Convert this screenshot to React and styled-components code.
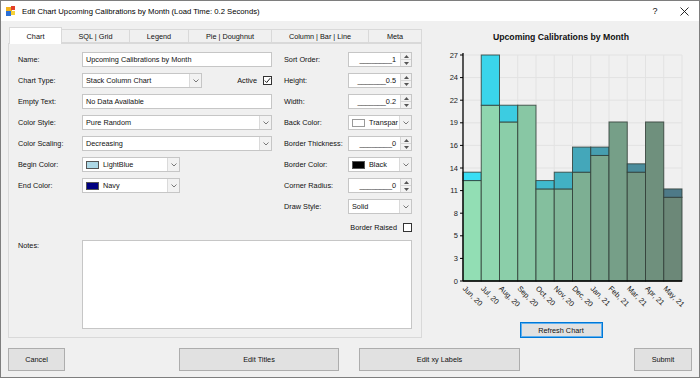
import React from "react";
import styled, { createGlobalStyle } from "styled-components";

const GlobalStyle = createGlobalStyle`
  html, body {
    margin: 0;
    padding: 0;
    background: #f0f0f0;
  }
`;

const Window = styled.div`
  width: 700px;
  height: 378px;
  box-sizing: border-box;
  border: 1px solid #7e7e7e;
  background: #f0f0f0;
  display: flex;
  flex-direction: column;
  font-family: "Liberation Sans", Arial, sans-serif;
  font-size: 7.3px;
  color: #111;
  overflow: hidden;
`;

const TitleBar = styled.div`
  height: 20px;
  flex: none;
  background: #fff;
  display: flex;
  align-items: center;
  padding-left: 5px;
`;

const TitleText = styled.div`
  margin-left: 6px;
  font-size: 7.7px;
  color: #000;
  flex: 1;
`;

const CaptionButton = styled.div`
  width: ${(p) => p.w}px;
  height: 20px;
  display: flex;
  align-items: center;
  justify-content: center;
  font-size: 9px;
  color: #111;
`;

const Body = styled.div`
  flex: 1;
  min-height: 0;
  display: flex;
  gap: 8px;
  padding: 6px 7px 10px 7px;
`;

const TabControl = styled.div`
  width: 414px;
  display: flex;
  flex-direction: column;
`;

const TabStrip = styled.div`
  height: 16px;
  display: flex;
  align-items: flex-end;
`;

const Tab = styled.div`
  position: relative;
  z-index: ${(p) => (p.active ? 1 : 0)};
  width: ${(p) => p.w}px;
  margin-left: ${(p) => p.ml || 0}px;
  height: ${(p) => (p.active ? 17 : 14)}px;
  margin-bottom: ${(p) => (p.active ? -1 : 0)}px;
  box-sizing: border-box;
  border: 1px solid #d9d9d9;
  border-bottom: ${(p) => (p.active ? "none" : "1px solid #d9d9d9")};
  border-left: ${(p) => (p.first ? "1px solid #d9d9d9" : "none")};
  background: ${(p) => (p.active ? "#fff" : "#f0f0f0")};
  display: flex;
  align-items: center;
  justify-content: center;
  white-space: nowrap;
`;

const TabPage = styled.div`
  flex: 1;
  box-sizing: border-box;
  border: 1px solid #d9d9d9;
  background: #f0f0f0;
  padding: 5px 9px 0 9px;
  display: flex;
  flex-direction: column;
`;

const FieldColumns = styled.div`
  display: flex;
  gap: 12px;
`;

const FieldGrid = styled.div`
  display: grid;
  grid-template-columns: 64px ${(p) => p.control}px;
  grid-auto-rows: 21px;
  align-items: center;
`;

const Label = styled.span`
  white-space: nowrap;
`;

const Cell = styled.div`
  display: flex;
  align-items: center;
  justify-content: ${(p) => p.justify || "flex-start"};
  grid-column: ${(p) => p.span || "auto"};
`;

const TrailingCheck = styled.div`
  margin-left: auto;
  display: flex;
  align-items: center;
`;

const TextBox = styled.div`
  width: ${(p) => p.w}px;
  height: 15px;
  box-sizing: border-box;
  border: 1px solid #c6c6c6;
  background: #fff;
  display: flex;
  align-items: center;
  padding-left: 3px;
  white-space: nowrap;
`;

const Combo = styled.div`
  width: ${(p) => p.w}px;
  height: 15px;
  box-sizing: border-box;
  border: 1px solid #c6c6c6;
  background: #fff;
  display: flex;
`;

const ComboValue = styled.div`
  flex: 1;
  display: flex;
  align-items: center;
  gap: 4px;
  padding-left: 3px;
  white-space: nowrap;
  overflow: hidden;
`;

const ComboArrow = styled.div`
  width: 11px;
  border-left: 1px solid #dadada;
  background: #f2f2f2;
  display: flex;
  align-items: center;
  justify-content: center;
`;

const Swatch = styled.span`
  width: 13px;
  height: 8px;
  box-sizing: border-box;
  border: 1px solid ${(p) => (p.light ? "#9a9a9a" : "#555")};
  background: ${(p) => p.color};
  flex: none;
`;

const Spinner = styled.div`
  width: 64px;
  height: 15px;
  box-sizing: border-box;
  border: 1px solid #c6c6c6;
  background: #fff;
  display: flex;
`;

const SpinValue = styled.div`
  flex: 1;
  padding-right: 4px;
  display: flex;
  align-items: center;
  justify-content: flex-end;
  white-space: nowrap;
`;

const SpinButtons = styled.div`
  width: 10px;
  border-left: 1px solid #d6d6d6;
  display: flex;
  flex-direction: column;
`;

const SpinButton = styled.div`
  flex: 1;
  background: #f2f2f2;
  display: flex;
  align-items: center;
  justify-content: center;
  border-top: ${(p) => (p.down ? "1px solid #d6d6d6" : "none")};
`;

const CheckBox = styled.span`
  width: 9px;
  height: 9px;
  box-sizing: border-box;
  border: 1px solid #333;
  background: #fff;
  margin-left: 6px;
  display: flex;
  align-items: center;
  justify-content: center;
  flex: none;
`;

const NotesRow = styled.div`
  display: grid;
  grid-template-columns: 64px 330px;
  margin-top: 2px;
`;

const NotesLabel = styled.span`
  padding-top: 1px;
`;

const NotesBox = styled.div`
  height: 89px;
  box-sizing: border-box;
  border: 1px solid #c6c6c6;
  background: #fff;
`;

const ChartColumn = styled.div`
  width: 262px;
  display: flex;
  flex-direction: column;
  align-items: center;
`;

const ChartTitle = styled.div`
  margin-top: 5px;
  height: 10px;
  line-height: 10px;
  font-size: 8.7px;
  font-weight: bold;
  color: #111;
`;

const ChartSvg = styled.svg`
  margin-top: 6px;
  display: block;
`;

const RefreshButton = styled.div`
  margin-top: 10px;
  width: 83px;
  height: 16px;
  box-sizing: border-box;
  border: 1px solid #0078d7;
  box-shadow: inset 0 0 0 1px #5fb0ef;
  background: #e1e1e1;
  display: flex;
  align-items: center;
  justify-content: center;
`;

const Footer = styled.div`
  height: 23px;
  flex: none;
  padding: 0 7px 6px 7px;
  display: flex;
  justify-content: space-between;
`;

const FooterGroup = styled.div`
  display: flex;
  gap: 20px;
`;

const Button = styled.div`
  width: ${(p) => p.w}px;
  height: 23px;
  box-sizing: border-box;
  border: 1px solid #adadad;
  background: #e1e1e1;
  display: flex;
  align-items: center;
  justify-content: center;
`;

const Chevron = () => (
  <svg width="6" height="4" viewBox="0 0 6 4">
    <path d="M0.5 0.5 L3 3 L5.5 0.5" fill="none" stroke="#6a6a6a" strokeWidth="0.9" />
  </svg>
);

const Arrow = ({ down }) => (
  <svg width="5" height="3" viewBox="0 0 5 3">
    <path d={down ? "M0 0 L5 0 L2.5 3 Z" : "M0 3 L5 3 L2.5 0 Z"} fill="#555" />
  </svg>
);

const Check = ({ checked }) => (
  <CheckBox>
    {checked && (
      <svg width="7" height="7" viewBox="0 0 7 7">
        <path d="M0.8 3.6 L2.7 5.5 L6.2 1.2" fill="none" stroke="#222" strokeWidth="1" />
      </svg>
    )}
  </CheckBox>
);

const ComboBox = ({ w, children }) => (
  <Combo w={w}>
    <ComboValue>{children}</ComboValue>
    <ComboArrow>
      <Chevron />
    </ComboArrow>
  </Combo>
);

const NumberBox = ({ value }) => (
  <Spinner>
    <SpinValue>{value}</SpinValue>
    <SpinButtons>
      <SpinButton>
        <Arrow />
      </SpinButton>
      <SpinButton down>
        <Arrow down />
      </SpinButton>
    </SpinButtons>
  </Spinner>
);

const AppIcon = () => (
  <svg width="10" height="10" viewBox="0 0 10 10">
    <rect x="0" y="1" width="6" height="5" fill="#f2b21b" />
    <rect x="5" y="0" width="4" height="4" fill="#e2402a" />
    <rect x="0" y="5" width="5" height="5" fill="#2b6fd6" />
    <rect x="5" y="5" width="4" height="4" fill="#f6d23a" />
  </svg>
);

const CloseIcon = () => (
  <svg width="9" height="9" viewBox="0 0 9 9">
    <path d="M0.5 0.5 L8.5 8.5 M8.5 0.5 L0.5 8.5" stroke="#111" strokeWidth="0.9" />
  </svg>
);

const MONTHS = ["Jun, 20", "Jul, 20", "Aug, 20", "Sep, 20", "Oct, 20", "Nov, 20", "Dec, 20", "Jan, 21", "Feb, 21", "Mar, 21", "Apr, 21", "May, 21"];
const DATA = [[12, 1], [21, 6], [19, 2], [21, 0], [11, 1], [11, 2], [13, 3], [15, 1], [19, 0], [13, 1], [19, 0], [10, 1]];

const mix = (a, b, t) => `rgb(${a.map((v, i) => Math.round(v + (b[i] - v) * t)).join(",")})`;
const GREEN = [[146, 222, 180], [108, 136, 120]];
const CYAN = [[56, 222, 245], [78, 122, 136]];

const Chart = () => {
  const x0 = 33;
  const x1 = 252;
  const y0 = 233;
  const yTop = 7;
  const bw = (x1 - x0) / 12;
  const unit = (y0 - yTop) / 27;
  const ticks = Array.from({ length: 11 }, (_, k) => k);

  return (
    <ChartSvg width="262" height="264" viewBox="0 0 262 264">
      {ticks.map((k) => (
        <line key={`h${k}`} x1={x0} x2={x1} y1={y0 - k * 2.7 * unit} y2={y0 - k * 2.7 * unit} stroke="#e2e2e2" strokeWidth="1" />
      ))}
      {DATA.map((_, i) => (
        <line key={`v${i}`} x1={x0 + (i + 1) * bw} x2={x0 + (i + 1) * bw} y1={yTop} y2={y0} stroke="#e2e2e2" strokeWidth="1" />
      ))}
      {DATA.map(([g, c], i) => {
        const t = i / 11;
        const x = x0 + i * bw;
        return (
          <g key={`b${i}`}>
            <rect x={x} y={y0 - g * unit} width={bw} height={g * unit} fill={mix(GREEN[0], GREEN[1], t)} stroke="#2e3b35" strokeOpacity="0.8" strokeWidth="1" />
            {c > 0 && (
              <rect x={x} y={y0 - (g + c) * unit} width={bw} height={c * unit} fill={mix(CYAN[0], CYAN[1], t)} stroke="#2e3b35" strokeOpacity="0.8" strokeWidth="1" />
            )}
          </g>
        );
      })}
      <line x1={x0} x2={x0} y1={yTop - 2} y2={y0} stroke="#000" strokeWidth="1.3" />
      <line x1={x0} x2={x1} y1={y0} y2={y0} stroke="#000" strokeWidth="1.3" />
      {ticks.map((k) => {
        const y = y0 - k * 2.7 * unit;
        return (
          <g key={`t${k}`}>
            <line x1={x0 - 3} x2={x0} y1={y} y2={y} stroke="#000" strokeWidth="1" />
            <text x={x0 - 5} y={y + 2.6} textAnchor="end" fontSize="7.5" fill="#1a1a1a" fontFamily="Liberation Sans, Arial, sans-serif">
              {Math.round(k * 2.7)}
            </text>
          </g>
        );
      })}
      {MONTHS.map((m, i) => {
        const sx = x0 + (i + 0.5) * bw - 10;
        const sy = 241;
        return (
          <text key={m} x={sx} y={sy} fontSize="7.5" fill="#1a1a1a" fontFamily="Liberation Sans, Arial, sans-serif" transform={`rotate(45 ${sx} ${sy})`}>
            {m}
          </text>
        );
      })}
    </ChartSvg>
  );
};

const TABS = [
  { name: "Chart", w: 53, active: true },
  { name: "SQL | Grid", w: 68 },
  { name: "Legend", w: 59 },
  { name: "Pie | Doughnut", w: 83 },
  { name: "Column | Bar | Line", w: 97 },
  { name: "Meta", w: 53 },
];

export default function App() {
  return (
    <>
      <GlobalStyle />
      <Window>
        <TitleBar>
          <AppIcon />
          <TitleText>Edit Chart Upcoming Calibrations by Month (Load Time: 0.2 Seconds)</TitleText>
          <CaptionButton w={28}>?</CaptionButton>
          <CaptionButton w={30}>
            <CloseIcon />
          </CaptionButton>
        </TitleBar>

        <Body>
          <TabControl>
            <TabStrip>
              {TABS.map((t, i) => (
                <Tab key={t.name} w={t.w} ml={i === 0 ? 1 : 0} first={i === 0} active={t.active}>
                  {t.name}
                </Tab>
              ))}
            </TabStrip>
            <TabPage>
              <FieldColumns>
                <FieldGrid control={190}>
                  <Label>Name:</Label>
                  <TextBox w={190}>Upcoming Calibrations by Month</TextBox>

                  <Label>Chart Type:</Label>
                  <Cell>
                    <ComboBox w={120}>Stack Column Chart</ComboBox>
                    <TrailingCheck>
                      <Label>Active</Label>
                      <Check checked />
                    </TrailingCheck>
                  </Cell>

                  <Label>Empty Text:</Label>
                  <TextBox w={190}>No Data Available</TextBox>

                  <Label>Color Style:</Label>
                  <ComboBox w={190}>Pure Random</ComboBox>

                  <Label>Color Scaling:</Label>
                  <ComboBox w={190}>Decreasing</ComboBox>

                  <Label>Begin Color:</Label>
                  <ComboBox w={98}>
                    <Swatch color="#add8e6" />
                    LightBlue
                  </ComboBox>

                  <Label>End Color:</Label>
                  <ComboBox w={98}>
                    <Swatch color="#000080" />
                    Navy
                  </ComboBox>
                </FieldGrid>

                <FieldGrid control={64}>
                  <Label>Sort Order:</Label>
                  <NumberBox value="________1" />

                  <Label>Height:</Label>
                  <NumberBox value="_______0.5" />

                  <Label>Width:</Label>
                  <NumberBox value="_______0.2" />

                  <Label>Back Color:</Label>
                  <ComboBox w={64}>
                    <Swatch color="#fff" light />
                    Transpar
                  </ComboBox>

                  <Label>Border Thickness:</Label>
                  <NumberBox value="________0" />

                  <Label>Border Color:</Label>
                  <ComboBox w={64}>
                    <Swatch color="#000" />
                    Black
                  </ComboBox>

                  <Label>Corner Radius:</Label>
                  <NumberBox value="________0" />

                  <Label>Draw Style:</Label>
                  <ComboBox w={64}>Solid</ComboBox>

                  <Cell span="1 / span 2" justify="flex-end">
                    <Label>Border Raised</Label>
                    <Check />
                  </Cell>
                </FieldGrid>
              </FieldColumns>

              <NotesRow>
                <NotesLabel>Notes:</NotesLabel>
                <NotesBox />
              </NotesRow>
            </TabPage>
          </TabControl>

          <ChartColumn>
            <ChartTitle>Upcoming Calibrations by Month</ChartTitle>
            <Chart />
            <RefreshButton>Refresh Chart</RefreshButton>
          </ChartColumn>
        </Body>

        <Footer>
          <Button w={57}>Cancel</Button>
          <FooterGroup>
            <Button w={160}>Edit Titles</Button>
            <Button w={161}>Edit xy Labels</Button>
          </FooterGroup>
          <Button w={58}>Submit</Button>
        </Footer>
      </Window>
    </>
  );
}
